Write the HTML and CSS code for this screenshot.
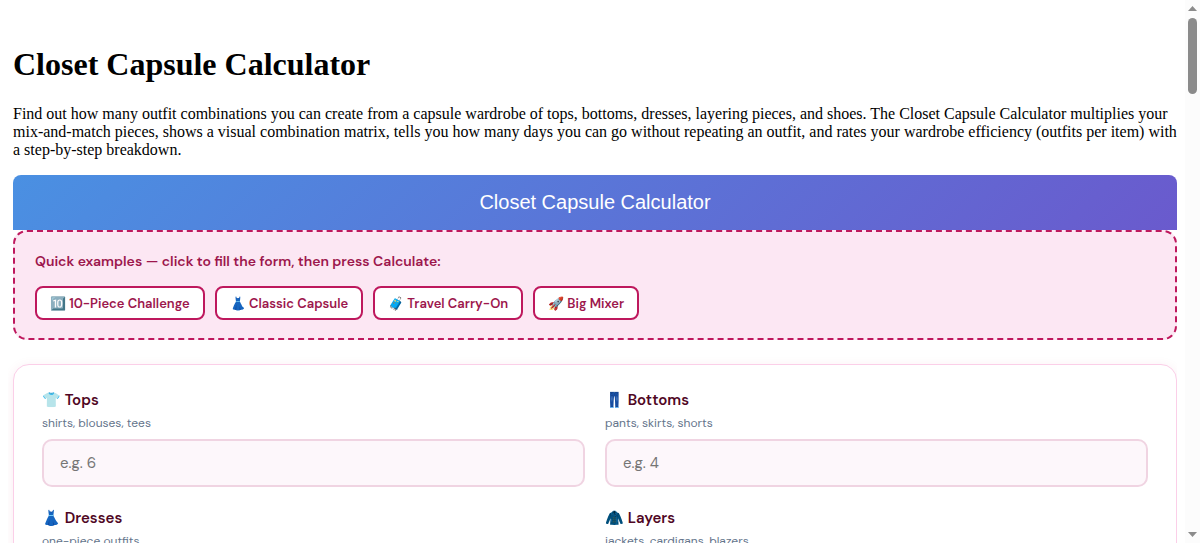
FILE: index.html
```html
<!DOCTYPE html>
<html lang="en">
<head>
  <meta charset="UTF-8" />
  <meta name="viewport" content="width=device-width, initial-scale=1" />
  <title>Closet Capsule Calculator</title>
  <link rel="stylesheet" href="styles.css">
</head>
<body>
  <main class="page">
    <h1>Closet Capsule Calculator</h1>
    <p>Find out how many outfit combinations you can create from a capsule wardrobe of tops, bottoms, dresses, layering pieces, and shoes. The Closet Capsule Calculator multiplies your mix-and-match pieces, shows a visual combination matrix, tells you how many days you can go without repeating an outfit, and rates your wardrobe efficiency (outfits per item) with a step-by-step breakdown.</p>

    <div class="calc-title">Closet Capsule Calculator</div>

    <section class="examples">
      <div class="examples-label">Quick examples — click to fill the form, then press Calculate:</div>
      <div class="examples-row">
        <button type="button">🔟 10-Piece Challenge</button>
        <button type="button">👗 Classic Capsule</button>
        <button type="button">🧳 Travel Carry-On</button>
        <button type="button">🚀 Big Mixer</button>
      </div>
    </section>

    <form class="card">
      <div class="field">
        <label for="tops">👕 Tops</label>
        <span class="hint">shirts, blouses, tees</span>
        <input type="number" id="tops" placeholder="e.g. 6" />
      </div>
      <div class="field">
        <label for="bottoms">👖 Bottoms</label>
        <span class="hint">pants, skirts, shorts</span>
        <input type="number" id="bottoms" placeholder="e.g. 4" />
      </div>
      <div class="field">
        <label for="dresses">👗 Dresses</label>
        <span class="hint">one-piece outfits</span>
        <input type="number" id="dresses" />
      </div>
      <div class="field">
        <label for="layers">🧥 Layers</label>
        <span class="hint">jackets, cardigans, blazers</span>
        <input type="number" id="layers" />
      </div>
    </form>
  </main>

  <div class="scrollbar" aria-hidden="true">
    <svg width="9" height="5" viewBox="0 0 9 5"><path d="M0 5 L4.5 0 L9 5 Z" /></svg>
    <div class="scrollbar-track"><div class="scrollbar-thumb"></div></div>
    <svg width="9" height="5" viewBox="0 0 9 5"><path d="M0 0 L4.5 5 L9 0 Z" /></svg>
  </div>
</body>
</html>
```

FILE: styles.css
```css
body {
  margin: 20px 23px 20px 8px;
  font-family: "Liberation Serif", serif;
  background: #fff;
}
.page {
  display: flow-root;
  padding: 5px 0 5px 5px;
  background: #fff;
  box-shadow: 0 4px 10px rgba(0,0,0,0.2);
}
h1 {
  margin: 21px 0 22px;
  font-size: 32px;
}
p {
  margin: 16px 0;
  font-size: 16px;
  line-height: 18px;
}
.calc-title {
  padding: 16px;
  font-family: "Liberation Sans", sans-serif;
  font-size: 20px;
  line-height: 23px;
  text-align: center;
  color: white;
  background: linear-gradient(135deg, #4a90e2, #6a5acd);
  border-radius: 8px 8px 0 0;
}
.examples,
.card {
  font-family: "DM Sans", Inter, sans-serif;
}
.examples {
  padding: 18px 20px;
  margin-bottom: 24px;
  background: #fce7f3;
  border: 2px dashed #be185d;
  border-radius: 14px;
}
.examples-label {
  margin-bottom: 14px;
  font-size: 14px;
  line-height: 22px;
  font-weight: 600;
  color: #9d174d;
}
.examples-row {
  display: flex;
  flex-wrap: wrap;
  gap: 10px;
}
.examples button {
  padding: 7px 13px 5px;
  font-family: inherit;
  font-size: 13px;
  line-height: 18px;
  font-weight: 600;
  color: #9d174d;
  background: white;
  border: 2px solid #be185d;
  border-radius: 8px;
  cursor: pointer;
}
.examples button:hover {
  background: #fdf2f8;
}
.card {
  display: grid;
  grid-template-columns: 1fr 1fr;
  gap: 20px;
  padding: 24px 28px;
  background: white;
  border: 1px solid #fbcfe8;
  border-radius: 16px;
  box-shadow: 0 2px 12px rgba(190,24,93,0.08);
}
.field {
  display: flex;
  flex-direction: column;
}
.field label {
  font-size: 15px;
  line-height: 22px;
  font-weight: 600;
  color: #500724;
}
.hint {
  margin: 3px 0 7px;
  font-size: 12px;
  line-height: 18px;
  color: #64748b;
}
.field input {
  box-sizing: border-box;
  width: 100%;
  height: 48px;
  padding: 0 16px;
  font-family: inherit;
  font-size: 15px;
  color: #500724;
  background: #fdf7fb;
  border: 2px solid #f0d4e2;
  border-radius: 10px;
}
.scrollbar {
  position: fixed;
  top: 0;
  right: 0;
  bottom: 0;
  box-sizing: border-box;
  width: 15px;
  padding: 6px 3px;
  display: flex;
  flex-direction: column;
  align-items: center;
  gap: 7px;
  background: #fcfcfc;
}
.scrollbar svg {
  fill: #8b8b8b;
}
.scrollbar-track {
  flex: 1;
}
.scrollbar-thumb {
  width: 9px;
  height: 76px;
  background: #8b8b8b;
  border-radius: 5px;
}
```
